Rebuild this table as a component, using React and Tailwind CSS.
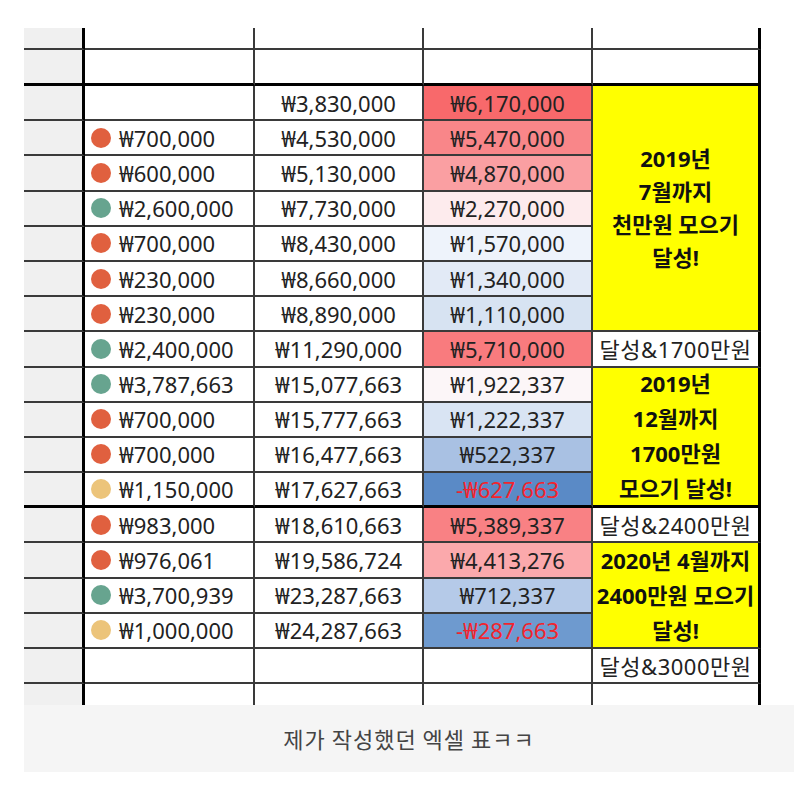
const dot = {
    red: 'bg-[#e0603f]',
    teal: 'bg-[#67a48f]',
    tan: 'bg-[#ecc47a]',
};

// [점 색, 입금액, 누적, 남은 금액, 남은 금액 배경, 마이너스 여부]
const rows = [
    [null, null, '₩3,830,000', '₩6,170,000', 'bg-[#f8696b]'],
    ['red', '₩700,000', '₩4,530,000', '₩5,470,000', 'bg-[#f98689]'],
    ['red', '₩600,000', '₩5,130,000', '₩4,870,000', 'bg-[#fa9fa2]'],
    ['teal', '₩2,600,000', '₩7,730,000', '₩2,270,000', 'bg-[#fdebed]'],
    ['red', '₩700,000', '₩8,430,000', '₩1,570,000', 'bg-[#eef3fb]'],
    ['red', '₩230,000', '₩8,660,000', '₩1,340,000', 'bg-[#e2eaf6]'],
    ['red', '₩230,000', '₩8,890,000', '₩1,110,000', 'bg-[#d7e3f2]'],
    ['teal', '₩2,400,000', '₩11,290,000', '₩5,710,000', 'bg-[#f97b7e]'],
    ['teal', '₩3,787,663', '₩15,077,663', '₩1,922,337', 'bg-[#fcf6f8]'],
    ['red', '₩700,000', '₩15,777,663', '₩1,222,337', 'bg-[#d9e4f3]'],
    ['red', '₩700,000', '₩16,477,663', '₩522,337', 'bg-[#a9c1e3]'],
    ['tan', '₩1,150,000', '₩17,627,663', '-₩627,663', 'bg-[#5a8ac6]', true],
    ['red', '₩983,000', '₩18,610,663', '₩5,389,337', 'bg-[#f98184]'],
    ['red', '₩976,061', '₩19,586,724', '₩4,413,276', 'bg-[#fba9ac]'],
    ['teal', '₩3,700,939', '₩23,287,663', '₩712,337', 'bg-[#b5cae8]'],
    ['tan', '₩1,000,000', '₩24,287,663', '-₩287,663', 'bg-[#6e9acf]', true],
    [null, null, null, null, 'bg-white'],
];

// 마지막 열: 행 인덱스별 내용 (span이 있으면 노란 병합 셀)
const goals = {
    0: { span: 'row-span-7', lines: ['2019년', '7월까지', '천만원 모으기', '달성!'], leading: 'leading-[33px]' },
    7: { text: '달성&1700만원' },
    8: { span: 'row-span-4', lines: ['2019년', '12월까지', '1700만원', '모으기 달성!'], leading: 'leading-[35px]' },
    12: { text: '달성&2400만원' },
    13: { span: 'row-span-3', lines: ['2020년 4월까지', '2400만원 모으기', '달성!'], leading: 'leading-[35px]' },
    16: { text: '달성&3000만원' },
};

const line = 'border-[#3a3a3a]';

export default function App() {
    const cells = [];

    // 위쪽 빈 두 줄
    ['border-b-2', 'border-b-[3px] border-b-black'].forEach((bottom, r) => {
        cells.push(<div key={`h${r}a`} className={`bg-[#f0f0f0] border-r-[3px] border-r-black ${bottom} ${line}`} />);
        cells.push(<div key={`h${r}b`} className={`border-r-2 ${bottom} ${line}`} />);
        cells.push(<div key={`h${r}c`} className={`border-r-2 ${bottom} ${line}`} />);
        cells.push(<div key={`h${r}d`} className={`border-r-2 ${bottom} ${line}`} />);
        cells.push(<div key={`h${r}e`} className={`border-r-[3px] border-r-black ${bottom} ${line}`} />);
    });

    rows.forEach(([color, deposit, total, left, bg, negative], i) => {
        const bottom = i === 11 ? 'border-b-[3px] border-b-black' : 'border-b-2';
        cells.push(<div key={`${i}a`} className={`bg-[#f0f0f0] border-r-[3px] border-r-black ${bottom} ${line}`} />);
        cells.push(
            <div key={`${i}b`} className={`flex items-center gap-2 pl-[6px] border-r-2 ${bottom} ${line}`}>
                {color && <span className={`h-5 w-5 shrink-0 rounded-full ${dot[color]}`} />}
                {deposit}
            </div>
        );
        cells.push(
            <div key={`${i}c`} className={`flex items-center justify-center border-r-2 ${bottom} ${line}`}>
                {total}
            </div>
        );
        cells.push(
            <div
                key={`${i}d`}
                className={`flex items-center justify-center border-r-2 ${bottom} ${line} ${bg} ${negative ? 'text-[#f2242d]' : ''}`}
            >
                {left}
            </div>
        );
        const goal = goals[i];
        if (goal && goal.lines) {
            cells.push(
                <div
                    key={`${i}e`}
                    className={`${goal.span} flex flex-col items-center justify-center bg-[#ffff00] font-bold text-[#111] ${goal.leading} border-r-[3px] border-r-black border-b-2 ${i === 8 ? 'border-b-[3px] border-b-black' : ''} ${line}`}
                >
                    {goal.lines.map((t) => (
                        <span key={t}>{t}</span>
                    ))}
                </div>
            );
        } else if (goal) {
            cells.push(
                <div key={`${i}e`} className={`flex items-center justify-center tracking-[0.5px] border-r-[3px] border-r-black ${bottom} ${line}`}>
                    {goal.text}
                </div>
            );
        }
    });

    // 잘린 마지막 줄
    cells.push(<div key="fa" className="bg-[#f0f0f0] border-r-[3px] border-r-black" />);
    cells.push(<div key="fb" className={`border-r-2 ${line}`} />);
    cells.push(<div key="fc" className={`border-r-2 ${line}`} />);
    cells.push(<div key="fd" className={`border-r-2 ${line}`} />);
    cells.push(<div key="fe" className="border-r-[3px] border-r-black" />);

    return (
        <div className="min-h-[798px] w-[811px] bg-white pt-[28px] pl-[24px] font-['Noto_Sans','Noto_Sans_CJK_KR',sans-serif]">
            <div className="w-[770px]">
                <div className="overflow-hidden h-[677px]">
                    <div className="grid w-[737px] grid-cols-[61px_170px_169px_169px_168px] grid-rows-[22px_36px_repeat(17,35.2px)_30px] text-[22px] leading-none text-[#222]">
                        {cells}
                    </div>
                </div>
                <div className="flex h-[67px] items-center justify-center bg-[#f5f5f5] text-[22px] tracking-[1px] text-[#444] font-['Noto_Sans_CJK_KR',sans-serif]">
                    제가 작성했던 엑셀 표ㅋㅋ
                </div>
            </div>
        </div>
    );
}
